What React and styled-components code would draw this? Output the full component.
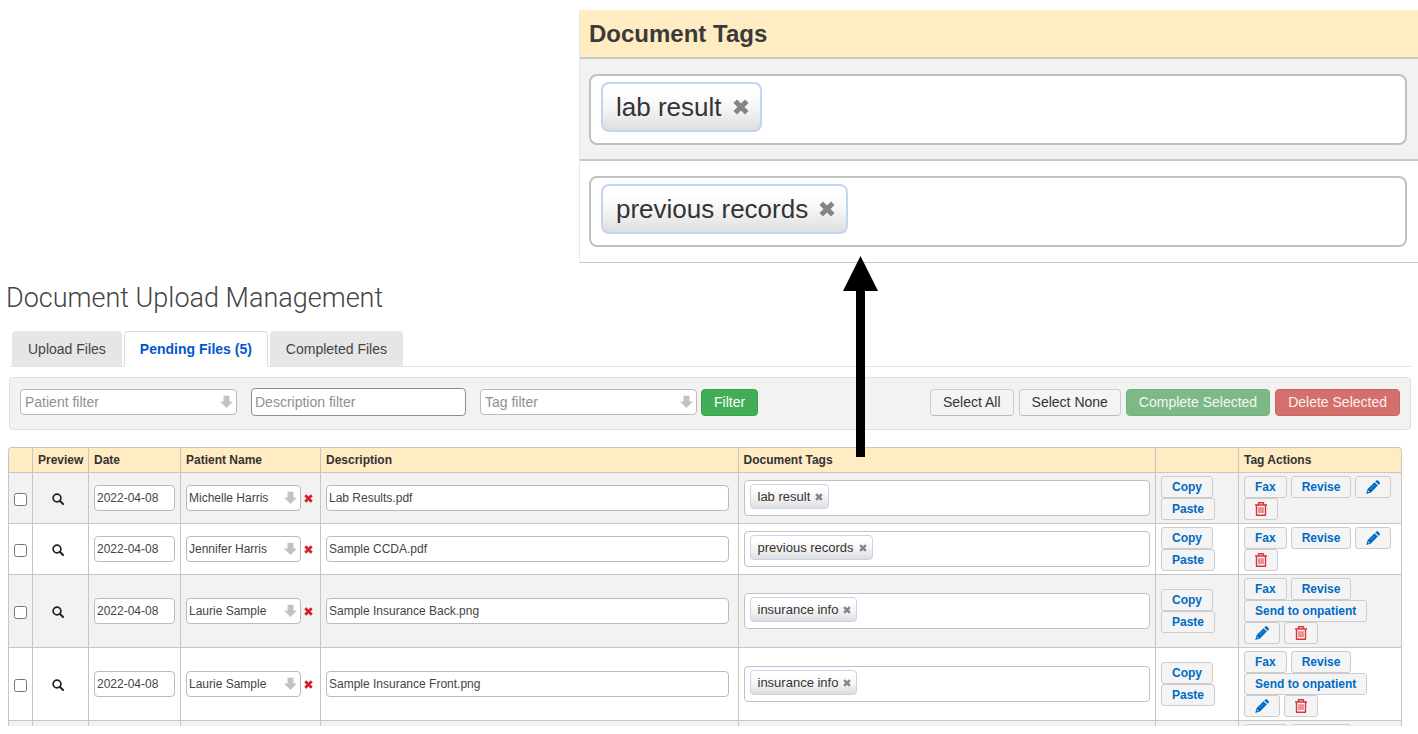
import React from "react";
import styled, { createGlobalStyle, css } from "styled-components";

const GlobalStyle = createGlobalStyle`
  *, *::before, *::after { box-sizing: border-box; }
  body {
    margin: 0;
    background: #fff;
    color: #333;
    font: 12px/16px "Liberation Sans", Arial, sans-serif;
  }
  button, input, select { font: inherit; color: inherit; }
`;

const Page = styled.div`
  position: relative;
  display: flex;
  flex-direction: column;
  height: 100vh;
  padding: 10px 0 8px;
  overflow: hidden;
`;

/* Enlarged view of the tags column */
const Callout = styled.section`
  flex: none;
  align-self: flex-end;
  width: calc(100% - 579px);
  min-width: 480px;
  border-left: 1px solid #e8e8e8;
`;

const CalloutTitle = styled.h2`
  margin: 0;
  padding: 9px 9px 8px;
  border-bottom: 2px solid #c8c8c8;
  background: #ffecc2;
  color: #3a3a3a;
  font-size: 24px;
  line-height: 30px;
`;

const CalloutRow = styled.div`
  padding: 15px 11px ${(p) => (p.$shaded ? 14 : 15)}px 9px;
  border-bottom: ${(p) => (p.$shaded ? 2 : 1)}px solid #c8c8c8;
  background: ${(p) => (p.$shaded ? "#f2f2f2" : "#fff")};
`;

const TagBox = styled.div`
  display: flex;
  align-items: flex-start;
  border: 1px solid #c0c0c0;
  background: #fff;
  ${(p) =>
    p.$large
      ? css`
          height: 71px;
          padding: 6px 10px;
          border-width: 2px;
          border-radius: 8px;
        `
      : css`
          height: 36px;
          padding: 3px 5px;
          border-radius: 4px;
        `}
`;

const Tag = styled.span`
  display: inline-flex;
  align-items: center;
  border: 1px solid #c3d4f2;
  background: linear-gradient(#fff 20%, #f4f4f4 55%, #dedede);
  color: #333;
  white-space: nowrap;
  ${(p) =>
    p.$large
      ? css`
          height: 50px;
          padding: 0 11px 0 13px;
          gap: 11px;
          border-width: 2px;
          border-radius: 8px;
          font-size: 26px;
        `
      : css`
          height: 25px;
          padding: 0 5px 0 7px;
          gap: 5px;
          border-radius: 4px;
          font-size: 13px;
        `}
`;

const PlainButton = styled.button`
  display: inline-flex;
  padding: 0;
  border: 0;
  background: none;
  color: ${(p) => p.$color};
  vertical-align: middle;
  cursor: pointer;
`;

const Main = styled.main`
  flex: 1;
  display: flex;
  flex-direction: column;
  min-height: 0;
  padding: 0 7px 0 8px;
`;

const PageTitle = styled.h1`
  margin: 18px 0 16px -2px;
  color: #444;
  font: 300 27px/34px Roboto, "Liberation Sans", sans-serif;
`;

const Tabs = styled.nav`
  display: flex;
  gap: 2px;
  margin-left: 2px;
  padding-left: 2px;
  border-bottom: 1px solid #e2e2e2;
`;

const Tab = styled.a`
  height: 36px;
  margin-bottom: -1px;
  padding: 0 15px;
  border: 1px solid ${(p) => (p.$active ? "#dcdcdc" : "#e6e6e6")};
  border-bottom-color: ${(p) => (p.$active ? "#fff" : "#e2e2e2")};
  border-radius: 4px 4px 0 0;
  background: ${(p) => (p.$active ? "#fff" : "#e6e6e6")};
  color: ${(p) => (p.$active ? "#0057d0" : "#444")};
  font-size: 14px;
  font-weight: ${(p) => (p.$active ? 700 : 400)};
  line-height: 34px;
  text-decoration: none;
`;

const FilterBar = styled.form`
  display: flex;
  align-items: center;
  height: 53px;
  margin: 10px 0 17px 1px;
  padding: 0 10px 3px;
  border: 1px solid #e0e0e0;
  border-radius: 4px;
  background: #f2f2f2;
`;

const FilterFields = styled.div`
  display: flex;
  flex: 1;
  align-items: center;
  gap: 14px;
`;

const FilterSubmit = styled.div`
  display: flex;
  align-items: center;
  gap: 4px;
`;

const BulkActions = styled.div`
  display: flex;
  gap: 5px;
`;

const buttonTones = {
  plain: css`
    border-color: #ccc #ccc #bbb;
    background: #f4f4f4;
    color: #333;
  `,
  green: css`
    border-color: #35a049;
    background: #41ad56;
    color: #fff;
  `,
  softGreen: css`
    border-color: #72b07e;
    background: #7cb987;
    color: #f2f8f3;
  `,
  softRed: css`
    border-color: #c86763;
    background: #d3706c;
    color: #fbefef;
  `,
};

const Button = styled.button`
  height: 27px;
  padding: 0 12px;
  border: 1px solid;
  border-radius: 4px;
  font-size: 14px;
  line-height: 24px;
  white-space: nowrap;
  cursor: pointer;
  ${(p) => buttonTones[p.$tone]}
`;

const field = css`
  height: 26px;
  padding: 0 2px;
  border: 1px solid #bbb;
  border-radius: 4px;
  background: #fff;
  color: #444;
`;

const FilterInput = styled.input`
  ${field}
  width: 215px;
  height: 28px;
  padding: 0 3px;
  border-color: #8c8c8c;
  font-size: 14px;
  &::placeholder { color: #909090; opacity: 1; }
`;

const TextInput = styled.input`
  ${field}
  display: block;
  width: 100%;
`;

const SelectWrap = styled.span`
  position: relative;
  display: flex;
  width: ${(p) => (p.$filter ? 217 : 115)}px;
  color: #c2c2c2;
  svg {
    position: absolute;
    top: 50%;
    right: 4px;
    transform: translateY(-50%);
    pointer-events: none;
  }
`;

const Select = styled.select`
  ${field}
  width: 100%;
  appearance: none;
  ${(p) =>
    p.$filter &&
    css`
      padding: 0 4px;
      color: #909090;
      font-size: 14px;
    `}
`;

const TableArea = styled.div`
  flex: 1;
  min-height: 0;
  margin-right: 9px;
  overflow: hidden;
`;

const Table = styled.table`
  width: 100%;
  table-layout: fixed;
  border: solid #c6c6c6;
  border-width: 1px 0 0 1px;
  border-radius: 4px;
  border-spacing: 0;
`;

const Col = styled.col`
  width: ${(p) => (p.$w ? `${p.$w}px` : "auto")};
`;

const HeadCell = styled.th`
  height: 25px;
  padding: 0 5px;
  border: solid #c6c6c6;
  border-width: 0 1px 1px 0;
  background: #ffecc2;
  color: #333;
  text-align: left;
  white-space: nowrap;
  &:first-child { border-top-left-radius: 4px; }
  &:last-child { border-top-right-radius: 4px; }
`;

const Row = styled.tr`
  background: #fff;
  &:nth-child(odd) { background: #f2f2f2; }
`;

const Cell = styled.td`
  padding: 3px ${(p) => p.$right ?? 5}px 3px 5px;
  border: solid #c6c6c6;
  border-width: 0 1px 1px 0;
  text-align: ${(p) => (p.$center ? "center" : "left")};
  vertical-align: middle;
`;

const Checkbox = styled.input`
  display: block;
  width: 13px;
  height: 13px;
  margin: 3px 0 0;
`;

const PatientField = styled.div`
  display: flex;
  align-items: center;
  gap: 3px;
`;

const ActionList = styled.div`
  display: flex;
  flex-wrap: wrap;
  flex-direction: ${(p) => (p.$stacked ? "column" : "row")};
  align-items: flex-start;
  column-gap: 4px;
`;

const ActionButton = styled.button`
  display: inline-flex;
  align-items: center;
  height: 22px;
  padding: 0 10px;
  border: 1px solid #ccc;
  border-radius: 3px;
  background: #f4f4f4;
  color: ${(p) => (p.$danger ? "#dc3338" : "#006bc4")};
  font-weight: 700;
  white-space: nowrap;
  cursor: pointer;
`;

/* Pointer from the table column up to the enlarged view */
const Pointer = styled.svg`
  position: absolute;
  top: 256px;
  left: 843px;
`;

const DownArrow = () => (
  <svg width="13" height="13" viewBox="0 0 13 13" fill="currentColor" aria-hidden="true">
    <path d="M3.500 0h6v6H13L6.500 12.500 0 6h3.500z" />
  </svg>
);

const Cross = ({ size }) => (
  <svg width={size} height={size} viewBox="0 0 10 10" fill="currentColor" aria-hidden="true">
    <path d="M2.500 .3 5 2.800 7.500 .3 9.700 2.500 7.200 5 9.700 7.500 7.500 9.700 5 7.200 2.500 9.700 .3 7.500 2.800 5 .3 2.500z" />
  </svg>
);

const Magnifier = () => (
  <svg width="12" height="12" viewBox="0 0 12 12" fill="none" stroke="currentColor" aria-hidden="true">
    <circle cx="5" cy="5" r="3.900" strokeWidth="1.700" />
    <path d="M7.800 7.800 11 11" strokeWidth="2" strokeLinecap="round" />
  </svg>
);

const Pencil = () => (
  <svg width="14" height="14" viewBox="0 0 14 14" fill="currentColor" aria-hidden="true">
    <path d="M9.300 1.500 10.200.6q.9-.8 1.800 0l1.500 1.500q.8.900 0 1.800l-.9.900z" />
    <path
      fillRule="evenodd"
      d="M8.500 2.300 11.800 5.600 5 12.400.2 13.900 1.700 9.100zM2.400 10.500 1.900 12.200 3.600 11.700z"
    />
    <path d="M4.300 9 8.400 4.900" stroke="#7db4e0" strokeWidth=".6" />
  </svg>
);

const Trash = () => (
  <svg width="12" height="14" viewBox="0 0 12 14" fill="none" stroke="currentColor" aria-hidden="true">
    <path d="M0 3h12M3.500 2.800V.7h5v2.100M1.500 3v10.300h9V3" strokeWidth="1.400" strokeLinejoin="round" />
    <path d="M4 5.200v5.800M6 5.200v5.800M8 5.200v5.800" strokeWidth="1" />
  </svg>
);

const TagField = ({ label, large }) => (
  <TagBox $large={large}>
    <Tag $large={large}>
      {label}
      <PlainButton type="button" $color="#858585" aria-label={`Remove tag ${label}`}>
        <Cross size={large ? 16 : 8} />
      </PlainButton>
    </Tag>
  </TagBox>
);

const FilterSelect = ({ label }) => (
  <SelectWrap $filter>
    <Select $filter aria-label={label}>
      <option>{label}</option>
    </Select>
    <DownArrow />
  </SelectWrap>
);

const documents = [
  { id: 1, patient: "Michelle Harris", description: "Lab Results.pdf", tag: "lab result" },
  { id: 2, patient: "Jennifer Harris", description: "Sample CCDA.pdf", tag: "previous records" },
  { id: 3, patient: "Laurie Sample", description: "Sample Insurance Back.png", tag: "insurance info", portal: true },
  { id: 4, patient: "Laurie Sample", description: "Sample Insurance Front.png", tag: "insurance info", portal: true },
  { id: 5, patient: "Laurie Sample", description: "Sample Insurance.png", tag: "insurance info", portal: true },
];

const columns = [
  { width: 24, title: "" },
  { width: 56, title: "Preview" },
  { width: 92, title: "Date" },
  { width: 140, title: "Patient Name" },
  { title: "Description" },
  { title: "Document Tags" },
  { width: 83, title: "" },
  { width: 163, title: "Tag Actions" },
];

const DocumentRow = ({ doc }) => (
  <Row>
    <Cell>
      <Checkbox type="checkbox" aria-label={`Select ${doc.description}`} />
    </Cell>
    <Cell $center $right={10}>
      <PlainButton type="button" $color="#222" aria-label={`Preview ${doc.description}`}>
        <Magnifier />
      </PlainButton>
    </Cell>
    <Cell>
      <TextInput aria-label="Date" defaultValue="2022-04-08" />
    </Cell>
    <Cell>
      <PatientField>
        <SelectWrap>
          <Select aria-label="Patient name">
            <option>{doc.patient}</option>
          </Select>
          <DownArrow />
        </SelectWrap>
        <PlainButton type="button" $color="#d2232a" aria-label="Clear patient">
          <Cross size={9} />
        </PlainButton>
      </PatientField>
    </Cell>
    <Cell $right={9}>
      <TextInput aria-label="Description" defaultValue={doc.description} />
    </Cell>
    <Cell>
      <TagField label={doc.tag} />
    </Cell>
    <Cell>
      <ActionList $stacked>
        <ActionButton type="button">Copy</ActionButton>
        <ActionButton type="button">Paste</ActionButton>
      </ActionList>
    </Cell>
    <Cell>
      <ActionList>
        <ActionButton type="button">Fax</ActionButton>
        <ActionButton type="button">Revise</ActionButton>
        {doc.portal && <ActionButton type="button">Send to onpatient</ActionButton>}
        <ActionButton type="button" aria-label="Edit">
          <Pencil />
        </ActionButton>
        <ActionButton type="button" $danger aria-label="Delete">
          <Trash />
        </ActionButton>
      </ActionList>
    </Cell>
  </Row>
);

export default function App() {
  return (
    <Page>
      <GlobalStyle />
      <Callout>
        <CalloutTitle>Document Tags</CalloutTitle>
        <CalloutRow $shaded>
          <TagField large label="lab result" />
        </CalloutRow>
        <CalloutRow>
          <TagField large label="previous records" />
        </CalloutRow>
      </Callout>

      <Main>
        <PageTitle>Document Upload Management</PageTitle>
        <Tabs>
          <Tab href="#upload">Upload Files</Tab>
          <Tab href="#pending" $active>Pending Files (5)</Tab>
          <Tab href="#completed">Completed Files</Tab>
        </Tabs>

        <FilterBar onSubmit={(e) => e.preventDefault()}>
          <FilterFields>
            <FilterSelect label="Patient filter" />
            <FilterInput placeholder="Description filter" aria-label="Description filter" />
            <FilterSubmit>
              <FilterSelect label="Tag filter" />
              <Button $tone="green">Filter</Button>
            </FilterSubmit>
          </FilterFields>
          <BulkActions>
            <Button type="button" $tone="plain">Select All</Button>
            <Button type="button" $tone="plain">Select None</Button>
            <Button type="button" $tone="softGreen">Complete Selected</Button>
            <Button type="button" $tone="softRed">Delete Selected</Button>
          </BulkActions>
        </FilterBar>

        <TableArea>
          <Table>
            <colgroup>
              {columns.map((c, i) => (
                <Col key={i} $w={c.width} />
              ))}
            </colgroup>
            <thead>
              <tr>
                {columns.map((c, i) => (
                  <HeadCell key={i}>{c.title}</HeadCell>
                ))}
              </tr>
            </thead>
            <tbody>
              {documents.map((doc) => (
                <DocumentRow key={doc.id} doc={doc} />
              ))}
            </tbody>
          </Table>
        </TableArea>
      </Main>

      <Pointer width="36" height="201" viewBox="0 0 36 201" aria-hidden="true">
        <path d="M17.500 0 35 35H22v166h-9V35H0z" />
      </Pointer>
    </Page>
  );
}
